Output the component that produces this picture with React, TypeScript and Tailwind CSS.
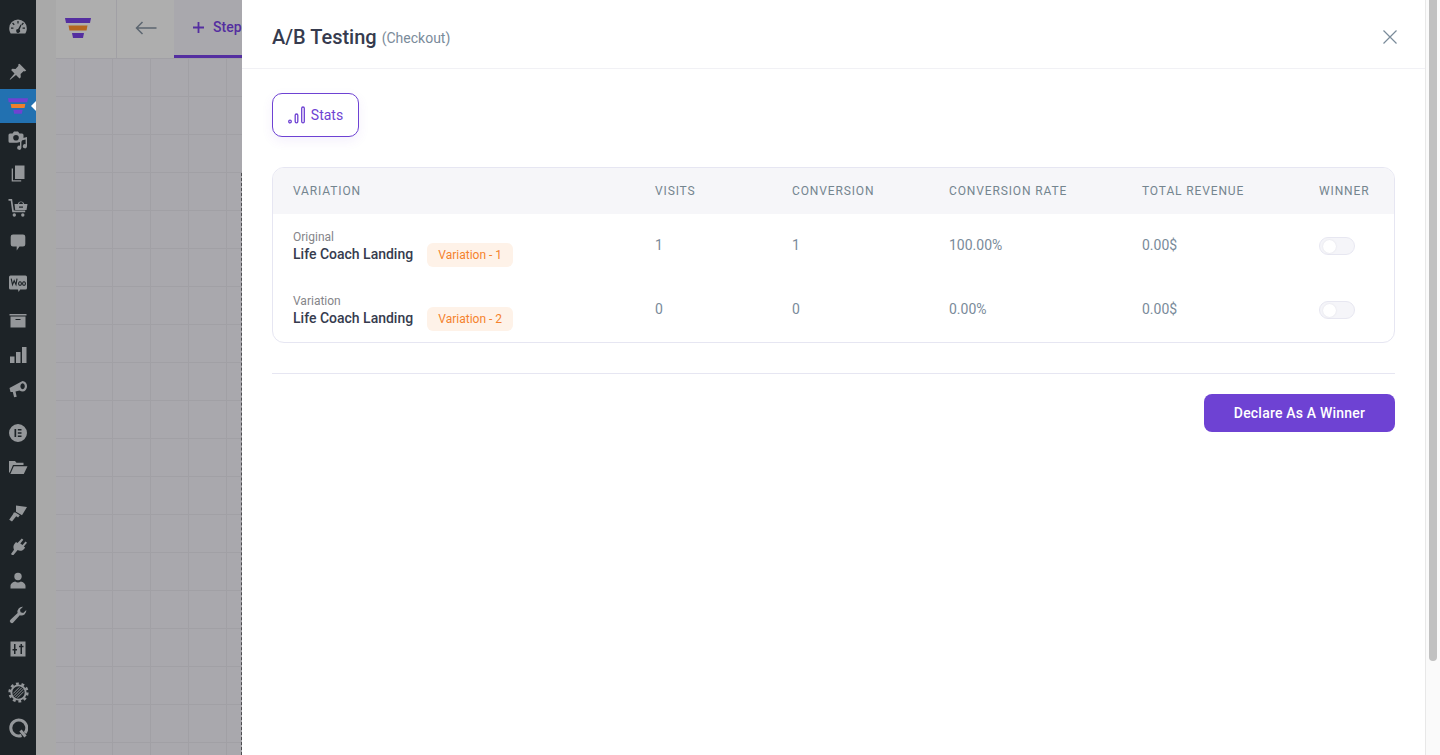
import React from "react";

const font = { fontFamily: "Roboto, sans-serif" };

// sidebar icons, drawn on a 20x20 box like the wp-admin ones
const icons: Record<string, React.ReactNode> = {
  dashboard: (
    <path fillRule="evenodd" d="M10 2.500a8.800 8.800 0 0 0-8.800 8.800c0 1.900.5 3.500 1.500 5.200h14.600c1-1.700 1.500-3.300 1.500-5.200A8.800 8.800 0 0 0 10 2.500zM9.400 4h1.200v2.400H9.400zM5 5.600l1.700 1.700-.9.900-1.700-1.700zm10 0l.9.900-1.700 1.700-.9-.9zM3 10.500h2.400v1.200H3zm11.600 0H17v1.200h-2.400zm-2-3l.9.500-1.900 4.800a1.900 1.900 0 1 1-1.500-.7z" />
  ),
  pin: (
    <path d="M11.500 1.800l6.700 6.700-1.400 1.100-1-.5-3.200 3 .2 3.100-1.300 1.300-3.500-3.500-5.800 4.800-.5-.5 4.800-5.800-3.400-3.400 1.300-1.300 3.100.2 3-3.200-.5-1z" />
  ),
  media: (
    <>
      <path fillRule="evenodd" d="M2 3.500h2.500L6 1.500h4l1.500 2H14a1.500 1.500 0 0 1 1.500 1.500v4.600a3 3 0 0 0-2.300 2.100L9 12.700H2a1.500 1.500 0 0 1-1.500-1.500V5A1.500 1.500 0 0 1 2 3.500zM8 5a2.800 2.800 0 1 0 0 5.600A2.800 2.800 0 0 0 8 5z" />
      <path d="M19 7.500v9.200a2.100 2.100 0 1 1-1.400-2V10l-4.200 1v7.200a2.100 2.100 0 1 1-1.400-2v-7z" transform="translate(0 -.4)" />
    </>
  ),
  pages: (
    <>
      <path d="M7 1.500h9.500V15H7z" />
      <path d="M4.500 4.500h1.300v11.700H14v1.300H4.500z" transform="translate(-.8 0)" />
    </>
  ),
  cart: (
    <>
      <path d="M.5 1h3.600l1.700 11.600h11.400v1.700H4.300L2.700 2.700H.5z" />
      <path fillRule="evenodd" d="M6.500 6h3.300a3.300 3.300 0 0 1 6.400 0H19.500l-1 6H7.200zm4.500 0h4a2 2 0 0 0-4 0z" />
      <path d="M11 8.500h4v1.200h-4z" fill="#1d2327" />
      <circle cx="6.300" cy="17" r="1.700" />
      <circle cx="14.800" cy="17" r="1.700" />
    </>
  ),
  comment: <path d="M5 2.500h10a2.300 2.300 0 0 1 2.300 2.300v7.400A2.300 2.300 0 0 1 15 14.500h-3.500L8.700 18.500v-4H5a2.300 2.300 0 0 1-2.300-2.300V4.800A2.300 2.300 0 0 1 5 2.500z" />,
  woo: (
    <>
      <path d="M2.500 1.500h15A1.500 1.500 0 0 1 19 3v11a1.500 1.500 0 0 1-1.500 1.500h-5.300l-1.600 2.500-.6-2.500H2.500A1.500 1.500 0 0 1 1 14V3a1.500 1.500 0 0 1 1.500-1.500z" />
      <path d="M3.500 5.500l1.300 6 1.700-4 1.800 4 1-6M12.300 8.500a1.400 1.800 0 1 0 .01 0zm4 0a1.400 1.800 0 1 0 .01 0z" fill="none" stroke="#1d2327" strokeWidth="1.100" transform="translate(-.3 -.8)" />
    </>
  ),
  archive: (
    <>
      <path d="M1.500 3h17v1.500h-17z" />
      <path fillRule="evenodd" d="M2.500 5.500h15v11h-15zM7.500 8v1h5V8z" />
    </>
  ),
  bars: <path d="M2 11.500h4.500V18H2zM8 7h4.500v11H8zM14 2h4.500v16H14z" />,
  megaphone: (
    <path fillRule="evenodd" d="M14.500 2a4.500 5.200 0 0 1 0 10.500c-1 0-2-.3-3-.9l-4 .9 1.200 5.200-2.600.6-1.300-5.300-2.300-.1L1.500 9zM14.600 4.300a2.200 3 0 1 0 .01 0z" />
  ),
  elementor: <path fillRule="evenodd" d="M10 1a9 9 0 1 0 0 18 9 9 0 0 0 0-18zM6.500 6h1.700v8H6.500zm3.300 0h3.700v1.600H9.800zm0 3.200h3.700v1.600H9.800zm0 3.200h3.700V14H9.800z" />,
  folder: (
    <>
      <path d="M1 4h6l1.500 1.800h7V8H5L1.800 15.500H1z" />
      <path d="M5.800 9.300H19.500L15.800 17H2.400z" />
    </>
  ),
  brush: (
    <>
      <path d="M8 2.500l11 1.500-5 8.300-6-3.500z" />
      <path d="M7.400 9.500l4.400 2.800-1.700 2.200-1.900-1.200L4 18.500l-2.800-1.800L5 11.300 5.800 9.400z" />
    </>
  ),
  plugin: (
    <path d="M13.800 1.500l1.500 1.200-3 3.700 2.200 1.700 3-3.600 1.500 1.200-3.200 3.900 1.300 1-1 1.300c-1.800 2-4.300 2.500-6.400 1.200L5.500 18H4l-1-1 3-4.300C5 10.500 5.200 8 7 6.200l1-1.200 1.500 1.100z" />
  ),
  user: (
    <>
      <circle cx="10" cy="5.500" r="3.700" />
      <path d="M2.500 17.500v-2.600c0-2.500 3-4.300 4.600-4.500a5 5 0 0 0 5.800 0c1.600.2 4.600 2 4.600 4.500v2.600z" />
    </>
  ),
  wrench: (
    <path d="M18.300 5a5 5 0 0 1-6.500 5.300L5.500 17.200a2 2 0 1 1-2.800-2.800L9.600 8A5 5 0 0 1 15 1.800l-3 3 .6 2.500 2.600.6z" />
  ),
  sliders: (
    <path fillRule="evenodd" d="M2.500 2.500h15v15h-15zM6 5v5H4.500v1.500H6V15h1.500v-3.500H9V10H7.500V5zm6.500 0v1.800H11v1.500h1.500V15H14V8.300h1.500V6.800H14V5z" />
  ),
};

const rows: { icon?: string; mt: string; active?: boolean; custom?: "funnel" | "gear" | "q" }[] = [
  { icon: "dashboard", mt: "mt-[10px]" },
  { icon: "pin", mt: "mt-[11px]" },
  { custom: "funnel", mt: "", active: true },
  { icon: "media", mt: "" },
  { icon: "pages", mt: "" },
  { icon: "cart", mt: "" },
  { icon: "comment", mt: "" },
  { icon: "woo", mt: "mt-[8px]" },
  { icon: "archive", mt: "mt-[3px]" },
  { icon: "bars", mt: "" },
  { icon: "megaphone", mt: "" },
  { icon: "elementor", mt: "mt-[10px]" },
  { icon: "folder", mt: "" },
  { icon: "brush", mt: "mt-[12px]" },
  { icon: "plugin", mt: "" },
  { icon: "user", mt: "" },
  { icon: "wrench", mt: "" },
  { icon: "sliders", mt: "" },
  { custom: "gear", mt: "mt-[9px]" },
  { custom: "q", mt: "mt-[2px]" },
];

function Funnel({ className, colors }: { className: string; colors: [string, string, string] }) {
  return (
    <svg viewBox="0 0 26 20" className={className}>
      <path d="M0 0h26l-1 5H1z" fill={colors[0]} />
      <path d="M3.500 7.500h19l-1 5h-17z" fill={colors[1]} />
      <path d="M7 15h12l-1 5H8z" fill={colors[2]} />
    </svg>
  );
}

function Gear() {
  return (
    <svg viewBox="0 0 22 22" className="w-[21px] h-[21px]" fill="none" stroke="#94979a">
      <circle cx="11" cy="11" r="7.500" strokeWidth="2" />
      <circle cx="11" cy="11" r="9.300" strokeWidth="2.600" strokeDasharray="3 2.840" />
      <path d="M6 14.500L14.500 6M7.500 16L16 7.500M5.500 12L12 5.500M10 16.500L16.500 10" strokeWidth="1" />
    </svg>
  );
}

function SideItem({ icon, mt, active, custom }: (typeof rows)[number]) {
  return (
    <div className={`relative h-[34px] flex items-center justify-center shrink-0 ${mt} ${active ? "bg-[#2271b1]" : ""}`}>
      {icon && (
        <svg viewBox="0 0 20 20" className="w-[20px] h-[20px]" fill="#94979a">
          {icons[icon]}
        </svg>
      )}
      {custom === "funnel" && <Funnel className="w-[20px] h-[16px]" colors={["#6f42d2", "#f0802c", "#6f42d2"]} />}
      {custom === "gear" && <Gear />}
      {custom === "q" && (
        <svg viewBox="0 0 20 20" className="w-[20px] h-[20px]" fill="none" stroke="#94979a" strokeWidth="3">
          <path d="M13.500 17.500A8 8 0 1 1 17 15M12.500 12.500l5 6" />
        </svg>
      )}
      {active && (
        <span className="absolute right-0 top-[12px] w-0 h-0 border-y-[5px] border-y-transparent border-r-[5px] border-r-white" />
      )}
    </div>
  );
}

function Toggle() {
  return (
    <div className="w-[36px] h-[18px] rounded-full bg-[#f5f5f9] border border-[#e7e7f1] flex items-center">
      <span className="ml-[3px] w-[13px] h-[13px] rounded-full bg-white shadow-[0_0_2px_rgba(60,60,90,0.12)]" />
    </div>
  );
}

const cols = "grid grid-cols-[362px_137px_157px_193px_177px_1fr] items-center pl-[20px]";

const data = [
  { kind: "Original", tag: "Variation - 1", visits: "1", conv: "1", rate: "100.00%" },
  { kind: "Variation", tag: "Variation - 2", visits: "0", conv: "0", rate: "0.00%" },
];

export default function App() {
  return (
    <div className="flex h-[755px] w-[1440px] overflow-hidden bg-white" style={font}>
      <aside className="w-[36px] shrink-0 bg-[#1d2327] flex flex-col">
        {rows.map((r, i) => (
          <SideItem key={i} {...r} />
        ))}
      </aside>

      <div className="w-[20px] shrink-0 bg-[#a9a9a9]" />

      {/* dimmed builder behind the drawer */}
      <div className="w-[186px] shrink-0 flex flex-col bg-[#a9a8ad]">
        <div className="h-[59px] shrink-0 flex border-b border-[#a1a0a5]">
          <div className="w-[61px] shrink-0 bg-[#aeaeae] border-r border-[#a1a0a5] flex items-center pl-[9px]">
            <Funnel className="w-[26px] h-[20px] -mt-[2px]" colors={["#542ea0", "#b5661f", "#542ea0"]} />
          </div>
          <div className="w-[57px] shrink-0 bg-[#aeaeae] flex items-center justify-center">
            <svg viewBox="0 0 22 14" className="w-[22px] h-[14px] -mt-[2px]" fill="none" stroke="#5c6670" strokeWidth="1.500">
              <path d="M21.500 7H1.500M7.500 1L1.500 7l6 6" />
            </svg>
          </div>
          <div className="flex-1 border-b-[3px] border-[#542ea0] flex items-center pl-[19px] gap-[9px] overflow-hidden">
            <svg viewBox="0 0 11 11" className="w-[11px] h-[11px] shrink-0" fill="none" stroke="#542ea0" strokeWidth="1.800">
              <path d="M5.500 0v11M0 5.500h11" />
            </svg>
            <span className="text-[14px] font-medium text-[#542ea0]">Step</span>
          </div>
        </div>
        <div className="flex-1 bg-[linear-gradient(#a1a0a5_1px,transparent_1px),linear-gradient(90deg,#a1a0a5_1px,transparent_1px)] bg-size-[38px_38px] bg-position-[18px_-1px] flex flex-col">
          <div className="flex-1 mt-[114px] border-r border-dashed border-[#4d4d50]" />
        </div>
      </div>

      {/* drawer */}
      <main className="w-[1183px] shrink-0 bg-white flex flex-col">
        <header className="h-[69px] shrink-0 border-b border-[#f1f1f5] flex items-center justify-between pl-[30px] pr-[28px] pt-[6px]">
          <div className="flex items-baseline gap-[5px]">
            <h1 className="text-[20px] font-medium text-[#363b4e]">A/B Testing</h1>
            <span className="text-[14px] text-[#7a8b9a] -translate-y-px">(Checkout)</span>
          </div>
          <svg viewBox="0 0 14 14" className="w-[14px] h-[14px]" fill="none" stroke="#7a8b9a" strokeWidth="1.200">
            <path d="M.5.5l13 13M13.500.5l-13 13" />
          </svg>
        </header>

        <div className="flex-1 pl-[30px] pr-[30px] pt-[24px]">
          <button className="w-[87px] h-[44px] rounded-[10px] border border-[#6e42d3] bg-white shadow-[0_4px_12px_rgba(110,66,211,0.08)] flex items-center justify-center gap-[5px] text-[14px] text-[#6e42d3]">
            <svg viewBox="0 0 18 18" className="w-[18px] h-[18px]" fill="none" stroke="#6e42d3" strokeWidth="1.300">
              <circle cx="2" cy="15.500" r="1.300" />
              <rect x="7.200" y="8" width="2.600" height="8.800" rx="1.300" />
              <rect x="13.700" y="1" width="2.600" height="15.800" rx="1.300" />
            </svg>
            Stats
          </button>

          <section className="mt-[30px] rounded-[12px] border border-[#e6e6f2] overflow-hidden">
            <div className={`${cols} h-[46px] bg-[#f6f6f9] text-[12px] font-normal tracking-[0.87px] text-[#74858f]`}>
              <span>VARIATION</span>
              <span>VISITS</span>
              <span>CONVERSION</span>
              <span>CONVERSION RATE</span>
              <span>TOTAL REVENUE</span>
              <span>WINNER</span>
            </div>
            {data.map((d) => (
              <div key={d.kind} className={`${cols} h-[64px] text-[14px] text-[#7a8b9a]`}>
                <div className="flex items-end gap-[14px]">
                  <div className="flex flex-col">
                    <span className="text-[12px] leading-[16px] text-[#858589]">{d.kind}</span>
                    <span className="text-[14px] leading-[18px] font-medium text-[#363b4e]">Life Coach Landing</span>
                  </div>
                  <span className="h-[24px] w-[86px] -mb-[4px] rounded-[6px] bg-[#fef2e8] text-[12px] text-[#f5822c] flex items-center justify-center">
                    {d.tag}
                  </span>
                </div>
                <span className="-mt-[2px]">{d.visits}</span>
                <span className="-mt-[2px]">{d.conv}</span>
                <span className="-mt-[2px]">{d.rate}</span>
                <span className="-mt-[2px]">0.00$</span>
                <Toggle />
              </div>
            ))}
          </section>

          <hr className="mt-[30px] border-[#e6e6f2]" />

          <div className="mt-[20px] flex justify-end">
            <button className="w-[191px] h-[38px] rounded-[8px] bg-[#6e42d3] text-white text-[14px] font-medium tracking-[0.2px]">
              Declare As A Winner
            </button>
          </div>
        </div>
      </main>

      {/* page scrollbar */}
      <div className="flex-1 flex bg-[#fafafa] border-l border-[#e8e8e8] pl-[3px]">
        <div className="w-[8px] h-[661px] bg-[#c1c1c1] rounded-b-[4px]" />
      </div>
    </div>
  );
}
